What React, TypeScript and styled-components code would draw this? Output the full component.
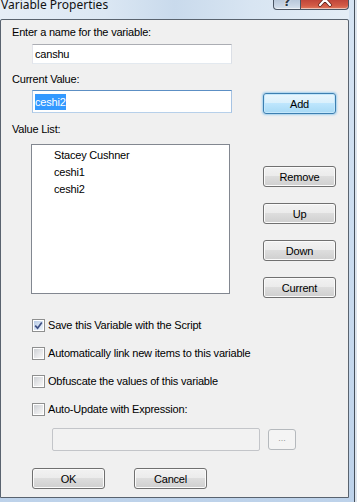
import styled, { createGlobalStyle } from "styled-components";

const GlobalStyle = createGlobalStyle`
  html, body { margin: 0; padding: 0; }
  body {
    background: #dde5ee;
    font-family: "Liberation Sans", Arial, sans-serif;
  }
`;

const Window = styled.div`
  width: 355px;
  height: 502px;
  box-sizing: border-box;
  display: flex;
  flex-direction: column;
  padding: 0 5px 4px 0;
  border-right: 1px solid #46505c;
  background: linear-gradient(180deg, #d6e4f3 0%, #c8daee 60%, #bdd2ea 100%);
  overflow: hidden;
`;

const TitleBar = styled.div`
  height: 19px;
  flex-shrink: 0;
  display: flex;
  align-items: flex-start;
  overflow: hidden;
  background: linear-gradient(90deg, #e6eef7 0%, #dbe7f3 30%, #c9daec 50%, #d8e5f2 72%, #e4edf6 100%);
`;

const Title = styled.span`
  font-family: "Noto Sans", "Open Sans", sans-serif;
  font-size: 12px;
  line-height: 12px;
  margin: -1px 0 0 1px;
  color: #111;
  white-space: nowrap;
`;

const CaptionButtons = styled.div`
  margin-left: auto;
  display: flex;
  height: 10px;
`;

const CaptionButton = styled.div<{ $close?: boolean }>`
  width: ${(p) => (p.$close ? 48 : 28)}px;
  height: 10px;
  box-sizing: border-box;
  border: 1px solid #4a5563;
  border-top: none;
  border-left-width: ${(p) => (p.$close ? 0 : 1)}px;
  border-radius: ${(p) => (p.$close ? "0 0 4px 0" : "0 0 0 4px")};
  background: ${(p) =>
    p.$close
      ? "linear-gradient(180deg, #c0463a 0%, #d25a45 60%, #e07a5e 100%)"
      : "linear-gradient(180deg, #b9c8da 0%, #c9d6e5 60%, #d9e3ee 100%)"};
  box-shadow: inset 0 -1px 0 rgba(255, 255, 255, 0.55);
  display: flex;
  justify-content: center;
  overflow: hidden;
`;

const HelpGlyph = styled.span`
  font-family: "DejaVu Sans", sans-serif;
  font-weight: bold;
  font-size: 12px;
  line-height: 12px;
  margin-top: -4px;
  color: #2d3744;
  text-shadow: 0 0 2px #fff;
`;

const Client = styled.div`
  flex: 1;
  min-height: 0;
  background: #f0f0f0;
  border: 1px solid #59636f;
  border-radius: 2px 2px 0 0;
  padding: 0 0 0 11px;
  display: flex;
  flex-direction: column;
  align-items: flex-start;
  font-size: 11px;
  color: #000;
`;

const Label = styled.div<{ $mt: number }>`
  margin-top: ${(p) => p.$mt}px;
  height: 13px;
  line-height: 13px;
  letter-spacing: -0.2px;
  white-space: nowrap;
`;

const TextBox = styled.div<{ $w: number; $h: number; $focused?: boolean; $disabled?: boolean }>`
  width: ${(p) => p.$w}px;
  height: ${(p) => p.$h}px;
  box-sizing: border-box;
  border: 1px solid;
  border-color: ${(p) =>
    p.$focused
      ? "#5c8fc4 #a6c3e3 #b7d0ea #a6c3e3"
      : p.$disabled
      ? "#c3c5c9"
      : "#abadb3 #dbdfe6 #e3e9ef #e2e3ea"};
  border-radius: ${(p) => (p.$disabled ? 2 : 0)}px;
  background: ${(p) => (p.$disabled ? "#f2f2f2" : "#fff")};
  display: flex;
  align-items: center;
  padding-left: 2px;
  letter-spacing: -0.2px;
  white-space: nowrap;
`;

const Selected = styled.span`
  background: #3399ff;
  color: #fff;
  line-height: 16px;
`;

const Row = styled.div<{ $mt: number; $ml: number; $gap: number; $align?: string }>`
  margin-top: ${(p) => p.$mt}px;
  margin-left: ${(p) => p.$ml}px;
  display: flex;
  align-items: ${(p) => p.$align ?? "flex-start"};
  gap: ${(p) => p.$gap}px;
`;

const Button = styled.button<{ $default?: boolean; $mt?: number }>`
  width: 73px;
  height: 21px;
  margin-top: ${(p) => p.$mt ?? 0}px;
  padding: 0;
  box-sizing: border-box;
  border: 1px solid ${(p) => (p.$default ? "#3c7fb1" : "#707070")};
  border-radius: 3px;
  background: ${(p) =>
    p.$default
      ? "linear-gradient(180deg, #eaf6fd 0%, #d9f0fc 49%, #bee6fd 50%, #a7d9f5 100%)"
      : "linear-gradient(180deg, #f2f2f2 0%, #ebebeb 49%, #dddddd 50%, #cfcfcf 100%)"};
  box-shadow: ${(p) =>
    p.$default
      ? "inset 0 0 0 1px #c4e7fb, 0 0 2px 1px rgba(98, 180, 236, 0.55)"
      : "inset 0 0 0 1px #fbfbfb"};
  font-family: "Liberation Sans", Arial, sans-serif;
  font-size: 11px;
  letter-spacing: -0.2px;
  color: #000;
`;

const SmallButton = styled.button`
  width: 28px;
  height: 21px;
  padding: 0 0 4px;
  box-sizing: border-box;
  border: 1px solid #b5b9bd;
  border-radius: 3px;
  background: #f4f4f4;
  font-family: "Liberation Sans", Arial, sans-serif;
  font-size: 9px;
  color: #9a9a9a;
`;

const ListBox = styled.div`
  width: 199px;
  height: 150px;
  box-sizing: border-box;
  border: 1px solid #828790;
  background: #fff;
  padding: 2px 0 0 22px;
`;

const ListItem = styled.div`
  height: 17px;
  line-height: 17px;
  letter-spacing: -0.2px;
  white-space: nowrap;
`;

const ButtonColumn = styled.div`
  margin-top: 22px;
  display: flex;
  flex-direction: column;
  gap: 16px;
`;

const CheckList = styled.div`
  margin-top: 19px;
  margin-left: 20px;
  display: flex;
  flex-direction: column;
  gap: 12px;
`;

const CheckRow = styled.label`
  height: 16px;
  display: flex;
  align-items: center;
  gap: 3px;
  letter-spacing: -0.2px;
  white-space: nowrap;
`;

const CheckOuter = styled.span`
  width: 13px;
  height: 13px;
  box-sizing: border-box;
  border: 1px solid #8e8f8f;
  background: #fff;
  padding: 1px;
  display: flex;
`;

const CheckFill = styled.span<{ $checked?: boolean }>`
  flex: 1;
  display: flex;
  align-items: center;
  justify-content: center;
  background: ${(p) =>
    p.$checked
      ? "linear-gradient(135deg, #b6c9e4 0%, #dbe6f4 60%, #eef3fa 100%)"
      : "linear-gradient(135deg, #cdd0d4 0%, #e6e7e9 55%, #f7f7f7 100%)"};
`;

function CheckBox({ checked, label }: { checked?: boolean; label: string }) {
  return (
    <CheckRow>
      <CheckOuter>
        <CheckFill $checked={checked}>
          {checked && (
            <svg width="9" height="9" viewBox="0 0 9 9">
              <path d="M1.2 4.6 L3.6 7.2 L7.8 1.4" fill="none" stroke="#3f5186" strokeWidth="1.7" />
            </svg>
          )}
        </CheckFill>
      </CheckOuter>
      {label}
    </CheckRow>
  );
}

export default function App() {
  return (
    <>
      <GlobalStyle />
      <Window>
        <TitleBar>
          <Title>Variable Properties</Title>
          <CaptionButtons>
            <CaptionButton>
              <HelpGlyph>?</HelpGlyph>
            </CaptionButton>
            <CaptionButton $close>
              <svg width="16" height="9" viewBox="0 0 16 9">
                <path d="M3 -6 L13 5 M13 -6 L3 5" stroke="#5a2018" strokeWidth="3.6" strokeLinecap="round" />
                <path d="M3 -6 L13 5 M13 -6 L3 5" stroke="#fff" strokeWidth="2.2" strokeLinecap="round" />
              </svg>
            </CaptionButton>
          </CaptionButtons>
        </TitleBar>
        <Client>
          <Label $mt={6}>Enter a name for the variable:</Label>
          <Row $mt={5} $ml={20} $gap={0}>
            <TextBox $w={200} $h={20}>canshu</TextBox>
          </Row>
          <Label $mt={9}>Current Value:</Label>
          <Row $mt={4} $ml={20} $gap={31}>
            <TextBox $w={200} $h={23} $focused>
              <Selected>ceshi2</Selected>
            </TextBox>
            <Button $default $mt={3}>Add</Button>
          </Row>
          <Label $mt={9}>Value List:</Label>
          <Row $mt={8} $ml={19} $gap={33}>
            <ListBox>
              <ListItem>Stacey Cushner</ListItem>
              <ListItem>ceshi1</ListItem>
              <ListItem>ceshi2</ListItem>
            </ListBox>
            <ButtonColumn>
              <Button>Remove</Button>
              <Button>Up</Button>
              <Button>Down</Button>
              <Button>Current</Button>
            </ButtonColumn>
          </Row>
          <CheckList>
            <CheckBox checked label="Save this Variable with the Script" />
            <CheckBox label="Automatically link new items to this variable" />
            <CheckBox label="Obfuscate the values of this variable" />
            <CheckBox label="Auto-Update with Expression:" />
          </CheckList>
          <Row $mt={11} $ml={40} $gap={8} $align="center">
            <TextBox $w={208} $h={23} $disabled />
            <SmallButton disabled>...</SmallButton>
          </Row>
          <Row $mt={17} $ml={20} $gap={29}>
            <Button>OK</Button>
            <Button>Cancel</Button>
          </Row>
        </Client>
      </Window>
    </>
  );
}
